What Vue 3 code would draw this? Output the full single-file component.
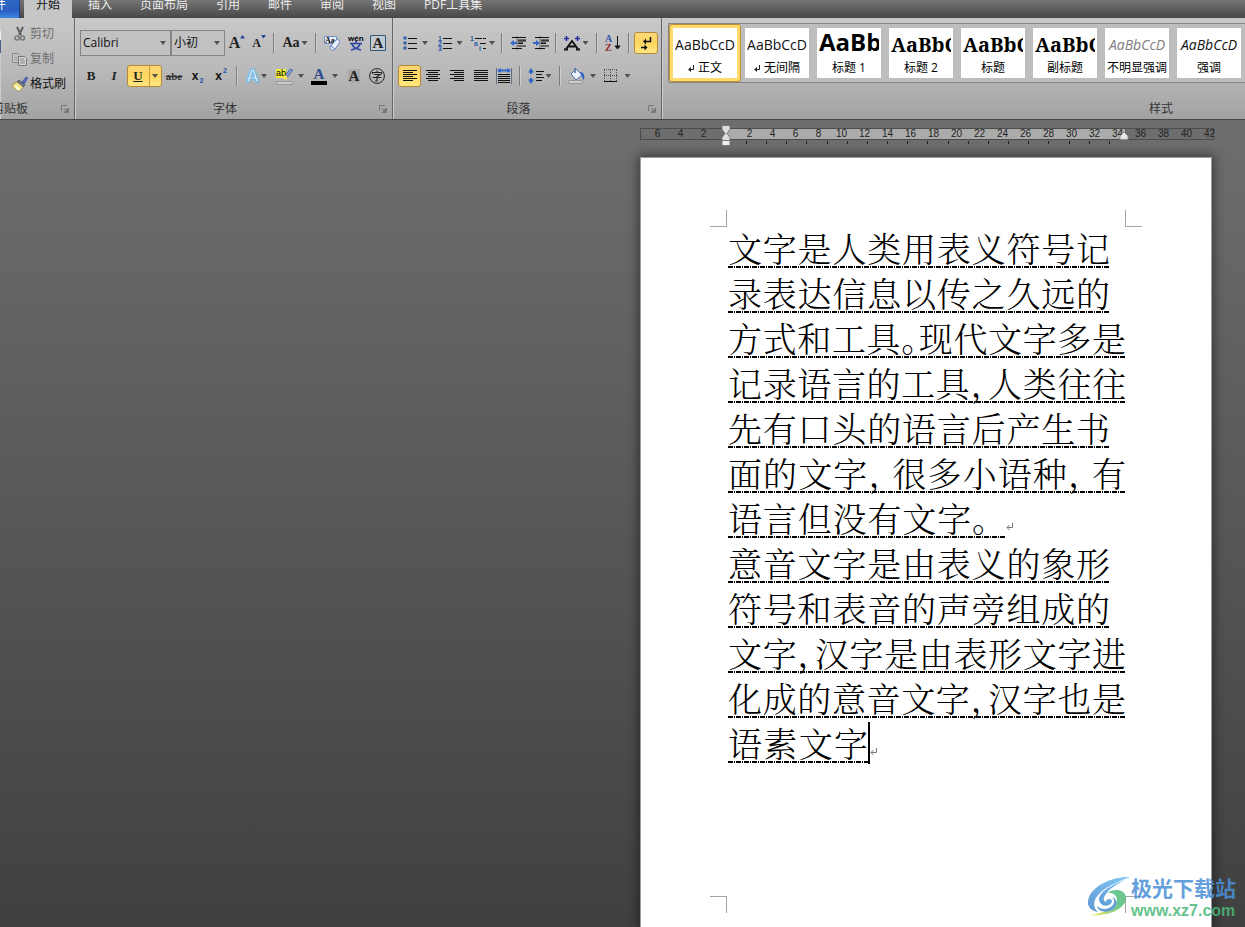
<script setup>
import { ref } from 'vue'

const tabs = ['开始', '插入', '页面布局', '引用', '邮件', '审阅', '视图', 'PDF工具集']
const activeTab = ref('开始')
const fontName = ref('Calibri')
const fontSize = ref('小初')

const styles = [
  { name: '正文', sample: 'AaBbCcD', kind: 'plain', mark: true },
  { name: '无间隔', sample: 'AaBbCcD', kind: 'plain', mark: true },
  { name: '标题 1', sample: 'AaBb', kind: 'h1' },
  { name: '标题 2', sample: 'AaBbC', kind: 'h2' },
  { name: '标题', sample: 'AaBbC', kind: 'title' },
  { name: '副标题', sample: 'AaBbC', kind: 'title' },
  { name: '不明显强调', sample: 'AaBbCcD', kind: 'subtle' },
  { name: '强调', sample: 'AaBbCcD', kind: 'em' },
]
const activeStyle = ref('正文')

const rulerLeft = [6, 4, 2]
const rulerRight = Array.from({ length: 21 }, (_, i) => (i + 1) * 2)

const lines = [
  { text: '文字是人类用表义符号记', size: 'normal' },
  { text: '录表达信息以传之久远的', size: 'normal' },
  { text: '方式和工具。现代文字多是', size: 'wide' },
  { text: '记录语言的工具，人类往往', size: 'wide' },
  { text: '先有口头的语言后产生书', size: 'normal' },
  { text: '面的文字，很多小语种，有', size: 'wide loose' },
  { text: '语言但没有文字。', size: 'mid', end: true },
  { text: '意音文字是由表义的象形', size: 'normal' },
  { text: '符号和表音的声旁组成的', size: 'normal' },
  { text: '文字，汉字是由表形文字进', size: 'wide' },
  { text: '化成的意音文字，汉字也是', size: 'wide' },
  { text: '语素文字', size: 'short', caret: true, end: true },
]
const parts = (t) => t.split(/([，。])/).filter(Boolean)
</script>

<template>
  <div class="app">
    <nav class="tabs">
      <button class="file">文件</button>
      <button v-for="t in tabs" :key="t" class="tab" :class="{ active: t === activeTab }" @click="activeTab = t">{{ t }}</button>
    </nav>

    <header class="ribbon">
      <section class="group clipboard">
        <div class="clip-rows">
          <button class="clip off">
            <svg width="16" height="16" viewBox="0 0 16 16"><path d="M5 1l4 8M11 1L7 9" stroke="#5e5e5e" stroke-width="2" fill="none" /><circle cx="5" cy="12" r="2" fill="none" stroke="#777" stroke-width="1.5" /><circle cx="10.500" cy="12" r="2" fill="none" stroke="#777" stroke-width="1.500" /></svg>剪切
          </button>
          <button class="clip off">
            <svg width="16" height="16" viewBox="0 0 16 16"><path d="M.5 2.500h6l2 2v7h-8z" fill="#ccc" stroke="#888" /><path d="M2 5h4M2 7h4M2 9h4" stroke="#999" /><path d="M6.500 5.500h6l2 2v7h-8z" fill="#d4d4d4" stroke="#777" /><path d="M8 8h4M8 10h5M8 12h5" stroke="#888" /></svg>复制
          </button>
          <button class="clip">
            <svg width="16" height="16" viewBox="0 0 16 16"><path d="M10 6l4-5 2 1-4 6z" fill="#5368b8" stroke="#334a96" stroke-width=".6" /><path d="M7 4l6 5-2 2-6-5z" fill="#6d7690" stroke="#333" stroke-width=".6" /><path d="M5 6l6 5-3 4c-3 0-6-2-8-6z" fill="#f4e48c" stroke="#8a7a35" stroke-width=".7" /><path d="M4 9l4 4-1 2-4-3z" fill="#fffbe0" /></svg>格式刷
          </button>
        </div>
        <svg class="paste-edge" width="2" height="22" viewBox="0 0 2 22"><path d="M0 0h1v9H0z" fill="#efefef" /><path d="M0 9h1v13H0z" fill="#4b6286" /></svg>
        <footer><span class="clip-label">剪贴板</span><button class="launch" aria-label="剪贴板设置"><svg width="8" height="8" viewBox="0 0 8 8"><path d="M.5 6V.500H6M3 3l2 2" fill="none" stroke="#777" /><path d="M7.500 3v4.500H3z" fill="#777" stroke="#777" /></svg></button></footer>
      </section>

      <section class="group font">
        <div class="row f1">
          <div class="combo"><select v-model="fontName" aria-label="字体"><option>Calibri</option></select><i class="arr"></i></div>
          <div class="combo"><select v-model="fontSize" aria-label="字号"><option>小初</option></select><i class="arr"></i></div>
          <button aria-label="增大字体"><span class="a16">A</span><svg class="up" width="5" height="4" viewBox="0 0 5 4"><path d="M0 3.500L2.500 0 5 3.500z" fill="#24479a" /></svg></button>
          <button aria-label="缩小字体"><span class="a12">A</span><svg class="up" width="5" height="4" viewBox="0 0 5 4"><path d="M0 0h5L2.500 3.500z" fill="#24479a" /></svg></button>
          <i class="sep"></i>
          <button class="drop tight" aria-label="更改大小写"><span class="a14">Aa</span><i class="arr"></i></button>
          <i class="sep"></i>
          <button aria-label="清除格式"><svg width="16" height="16" viewBox="0 0 16 16"><path d="M.5 1.500h12v7H.500z" fill="#e8efff" stroke="#718cc9" /><text x="1" y="8" font-size="8" font-weight="700" font-family="Liberation Serif">Aa</text><path d="M6 12l6-7c1-1 4 0 4 2l-5 7c-1 2-5 1-5-2z" fill="#edf2ff" stroke="#6682bd" /><path d="M7 11l4 3" stroke="#6682bd" /></svg></button>
          <button aria-label="拼音指南"><svg width="16" height="18" viewBox="0 0 16 18"><text x="0" y="7" font-size="8" font-weight="700" font-family="Liberation Sans">wén</text><path d="M2 9.500h12M8 7v2M4 10c1 3 4 5 9 6M12 10c-1 3-4 5-9 6" stroke="#2946a4" stroke-width="1.600" fill="none" /></svg></button>
          <button aria-label="字符边框"><svg width="16" height="16" viewBox="0 0 16 16"><path d="M.5.500h15v15H.500z" fill="#c4c9cf" stroke="#345a79" /><text x="2.500" y="13" font-size="15" font-weight="700" font-family="Liberation Serif" fill="#222">A</text></svg></button>
        </div>
        <div class="row f2">
          <button class="serif"><b>B</b></button>
          <button class="serif"><b><i>I</i></b></button>
          <div class="split">
            <button class="serif"><b><u>U</u></b></button><button aria-label="下划线样式"><i class="arr"></i></button>
          </div>
          <button class="strike">abe</button>
          <button class="xs" aria-label="下标">x<sub>2</sub></button>
          <button class="xs" aria-label="上标">x<sup>2</sup></button>
          <i class="sep"></i>
          <button class="drop tight" aria-label="文本效果"><span class="glow">A</span><i class="arr"></i></button>
          <button class="drop" aria-label="突出显示"><svg width="17" height="17" viewBox="0 0 17 17"><path d="M0 1h10v9H0z" fill="#f5ee38" /><text x="0" y="8" font-size="9" font-family="Liberation Sans">ab</text><path d="M14 1l3 1-6 8-3 1 1-3z" fill="#7e9bd0" stroke="#3e5d99" stroke-width=".7" /><path d="M6 9l3 3 3-2-3-3z" fill="#f8e64a" /><path d="M.5 13.500h16v3H.500z" fill="#ccc" stroke="#999" /></svg><i class="arr"></i></button>
          <button class="drop" aria-label="字体颜色"><svg width="16" height="17" viewBox="0 0 16 17"><text x="2.500" y="11" font-size="15" font-weight="700" font-family="Liberation Serif" fill="#2b4a8c">A</text><path d="M0 13h16v4H0z" /></svg><i class="arr"></i></button>
          <button aria-label="字符底纹"><span class="shade">A</span></button>
          <button aria-label="带圈字符"><svg width="16" height="16" viewBox="0 0 16 16"><circle cx="8" cy="8" r="7.400" fill="none" stroke="#222" /><path d="M8 2.500v2M3.500 6V4.500h9V6M5 6.500h6L8 8.500V13H6M3.500 9.500h9" fill="none" stroke="#222" stroke-width="1.100" /></svg></button>
        </div>
        <footer><span>字体</span><button class="launch" aria-label="字体设置"><svg width="8" height="8" viewBox="0 0 8 8"><path d="M.5 6V.500H6M3 3l2 2" fill="none" stroke="#777" /><path d="M7.500 3v4.500H3z" fill="#777" stroke="#777" /></svg></button></footer>
      </section>

      <section class="group para">
        <div class="row p1">
          <button class="drop" aria-label="项目符号"><svg width="14" height="14" viewBox="0 0 14 14"><g fill="#3a62ae"><circle cx="2" cy="2" r="1.800" /><circle cx="2" cy="7" r="1.800" /><circle cx="2" cy="12" r="1.800" /></g><path d="M5 2.500h9M5 7.500h9M5 12.500h9" stroke="#111" /></svg><i class="arr"></i></button>
          <button class="drop" aria-label="编号"><svg width="14" height="15" viewBox="0 0 14 15"><g fill="#2f58aa" font-size="7" font-weight="700" font-family="Liberation Sans"><text x="0" y="5">1</text><text x="0" y="10">2</text><text x="0" y="15">3</text></g><path d="M5 2.500h9M5 7.500h9M5 12.500h9" stroke="#111" /></svg><i class="arr"></i></button>
          <button class="drop tight" aria-label="多级列表"><svg width="17" height="15" viewBox="0 0 17 15"><g fill="#2f58aa" font-size="7" font-weight="700" font-family="Liberation Sans"><text x="0" y="5">1</text><text x="4" y="10">a</text><text x="9" y="15">i</text></g><path d="M5 2.500h11M10 7.500h6M13 12.500h3" stroke="#111" stroke-dasharray="7 1" /></svg><i class="arr"></i></button>
          <i class="sep"></i>
          <button aria-label="减少缩进量"><svg width="16" height="14" viewBox="0 0 16 14"><path d="M2 1.500h14M8 4h8M8 7h5M8 10h8M2 12.500h10" stroke="#111" /><path d="M8 5h8M8 7.500h5" stroke="#111" /><path d="M7 .5v13" stroke="#111" stroke-dasharray="1 1" /><path d="M0 7l4-3v2h3v2H4v2z" fill="#3467c2" /></svg></button>
          <button aria-label="增加缩进量"><svg width="16" height="14" viewBox="0 0 16 14"><path d="M2 1.500h14M8 4h8M8 7h5M8 10h8M2 12.500h10" stroke="#111" /><path d="M8 5h8M8 7.500h5" stroke="#111" /><path d="M7 .5v13" stroke="#111" stroke-dasharray="1 1" /><path d="M7 7L3 4v2H0v2h3v2z" fill="#3467c2" /></svg></button>
          <i class="sep"></i>
          <button class="drop tight" aria-label="中文版式"><svg width="18" height="15" viewBox="0 0 18 15"><path d="M3 13L9 5l6 8M5 10.500h8M1 13.500h4M13 13.500h4" fill="none" stroke="#111" stroke-width="1.800" /><path d="M1 2.500h5M3.500 0v5M12 2.500h5M14.500 0v5" stroke="#2a2a9c" stroke-width="1.500" /></svg><i class="arr"></i></button>
          <i class="sep"></i>
          <button aria-label="排序"><svg width="16" height="16" viewBox="0 0 16 16"><text x="0" y="7" font-size="10" font-weight="700" font-family="Liberation Serif" fill="#2f58aa">A</text><text x="0" y="16" font-size="10" font-weight="700" font-family="Liberation Serif" fill="#93282d">Z</text><path d="M12.500 1v12M10 11l2.500 3 2.500-3z" stroke="#111" fill="#111" /></svg></button>
          <i class="sep"></i>
          <button class="on" aria-label="显示编辑标记"><svg width="12" height="13" viewBox="0 0 12 13"><path d="M10.500 0v4.500H5M1 10.500h5" stroke="#111" fill="none" stroke-width="1.500" /><path d="M6 1.500v6L3 4.500zM4.500 7.500v6l3-3z" fill="#111" /></svg></button>
        </div>
        <div class="row p2">
          <button class="on" aria-label="左对齐"><svg width="14" height="12" viewBox="0 0 14 12"><path d="M0 .5h14M0 2.500h10M0 4.500h14M0 6.500h10M0 8.500h14M0 10.500h10" stroke="#111" /></svg></button>
          <button aria-label="居中"><svg width="14" height="12" viewBox="0 0 14 12"><path d="M0 .5h14M2 2.500h10M0 4.500h14M2 6.500h10M0 8.500h14M2 10.500h10" stroke="#111" /></svg></button>
          <button aria-label="右对齐"><svg width="14" height="12" viewBox="0 0 14 12"><path d="M0 .5h14M4 2.500h10M0 4.500h14M4 6.500h10M0 8.500h14M4 10.500h10" stroke="#111" /></svg></button>
          <button aria-label="两端对齐"><svg width="14" height="12" viewBox="0 0 14 12"><path d="M0 .5h14M0 2.500h14M0 4.500h14M0 6.500h14M0 8.500h14M0 10.500h14" stroke="#111" /></svg></button>
          <button aria-label="分散对齐"><svg width="16" height="16" viewBox="0 0 16 16"><path d="M.5 0v16M15.500 0v16" stroke="#5c6d86" /><path d="M2 2.500h12" stroke="#2f67c4" stroke-width="2" /><path d="M1 2.500L5 0v5zM15 2.500L11 0v5z" fill="#2f67c4" /><path d="M2 6.500h12M2 8.500h12M2 10.500h12M2 12.500h12M2 14.500h12" stroke="#111" /></svg></button>
          <i class="sep"></i>
          <button class="drop tight" aria-label="行距"><svg width="16" height="16" viewBox="0 0 16 16"><path d="M3 3v3M3 10v3" stroke="#2f67c4" stroke-width="2" /><path d="M0 4.500L3 0l3 4.500zM0 11.500L3 16l3-4.500z" fill="#2f67c4" /><path d="M8 3.500h8M8 6.500h6M8 9.500h8M8 12.500h6" stroke="#111" /></svg><i class="arr"></i></button>
          <i class="sep"></i>
          <button class="drop" aria-label="底纹"><svg width="17" height="16" viewBox="0 0 17 16"><path d="M3 6l5-5 6 6-6 5z" fill="#e8f0fb" stroke="#55719f" /><path d="M7 0v5" stroke="#55719f" stroke-width="1.500" /><path d="M12 4c4 0 5 3 4 8-2-1-2-4-3-5z" fill="#3468c0" /><path d="M.5 12.500h14v3H.500z" fill="#ccc" stroke="#999" /></svg><i class="arr"></i></button>
          <button class="drop wide-gap" aria-label="边框"><svg width="14" height="14" viewBox="0 0 14 14"><path d="M.5 1v11M6.500 1v11M12.500 1v11M0 .5h13M0 6.500h13" stroke="#555" stroke-dasharray="1 1" /><path d="M0 12.500h13" stroke="#111" stroke-width="1" /></svg><i class="arr"></i></button>
        </div>
        <footer><span>段落</span><button class="launch" aria-label="段落设置"><svg width="8" height="8" viewBox="0 0 8 8"><path d="M.5 6V.500H6M3 3l2 2" fill="none" stroke="#777" /><path d="M7.500 3v4.500H3z" fill="#777" stroke="#777" /></svg></button></footer>
      </section>

      <section class="group styles">
        <div class="gallery">
          <button v-for="s in styles" :key="s.name" class="card" :class="{ sel: s.name === activeStyle }" @click="activeStyle = s.name">
            <span class="sample" :class="s.kind">{{ s.sample }}</span>
            <span class="name"><svg v-if="s.mark" width="6" height="7" viewBox="0 0 6 7"><path d="M5.500 0v4.500H1" fill="none" stroke="#222" /><path d="M3 2v5L0 4.500z" fill="#222" /></svg>{{ s.name }}</span>
          </button>
        </div>
        <footer><span>样式</span></footer>
      </section>
    </header>

    <main class="workspace">
      <div class="doc">
        <div class="ruler">
          <div class="nums out-l"><span v-for="n in rulerLeft" :key="n">{{ n }}</span></div>
          <div class="nums in"><span v-for="n in rulerRight" :key="n">{{ n }}</span></div>
          <svg class="mark-l" width="10" height="22" viewBox="0 0 10 22"><path d="M1 .5h8v4l-3 4 3 4v3H1v-3l3-4-3-4z" fill="#ddd" stroke="#777" /><path d="M1 15.500h8v5H1z" fill="#eee" stroke="#777" /></svg>
          <svg class="mark-r" width="10" height="9" viewBox="0 0 10 9"><path d="M1 8.500V5l4-4 4 4v3.500z" fill="#e8e8e8" stroke="#888" /></svg>
        </div>
        <div class="ticks"><i v-for="n in 19" :key="n"></i></div>
        <article class="page">
          <i class="corner tl"></i><i class="corner tr"></i><i class="corner bl"></i><i class="corner br"></i>
          <div v-for="(l, i) in lines" :key="i" class="line">
            <p :class="l.size"><template v-for="(p, j) in parts(l.text)" :key="j"><span v-if="p === '，' || p === '。'" class="punct">{{ p }}</span><template v-else>{{ p }}</template></template></p>
            <i v-if="l.caret" class="caret"></i>
            <svg v-if="l.end" class="ret" width="8" height="8" viewBox="0 0 8 8"><path d="M6.500 0v4.500H1M3.500 2L1 4.500 3.500 7" fill="none" stroke="#777" /></svg>
          </div>
        </article>
      </div>
      <a class="watermark" href="#">
        <svg width="44" height="42" viewBox="0 0 44 42">
          <defs>
            <linearGradient id="wb" x1="0" y1="1" x2="1" y2="0"><stop offset="0" stop-color="#4388cf" /><stop offset="1" stop-color="#6fc3f2" /></linearGradient>
            <linearGradient id="wg" x1="0" y1="1" x2="1" y2="0"><stop offset="0" stop-color="#f1e64b" /><stop offset=".6" stop-color="#53bd7c" /></linearGradient>
          </defs>
          <path d="M43 1C26 0 3 10 1 25c-1 6 4 10 10 11-6-5-5-13 3-20C22 9 33 5 43 1z" fill="url(#wb)" />
          <path d="M38 4c-12 4-25 11-26 19 0 5 5 8 10 6 4-2 4-6 0-6-2 0-3 1-3 3-3-1-3-4 0-8 4-6 10-9 19-14z" fill="url(#wb)" />
          <path d="M20 17c7-5 18-4 19 4 1 10-15 20-36 18 12-1 26-8 27-15 0-5-5-8-10-7z" fill="url(#wg)" />
          <path d="M25 21c4 3 2 9-3 11-4 2-9 1-12-2 1 6 9 7 15 4 6-4 6-11 0-13z" fill="#4a90d0" />
        </svg>
        <span><b class="cn">极光下载站</b><b class="url">www.xz7.com</b></span>
      </a>
    </main>
  </div>
</template>

<style>
html, body { margin: 0; background: #404040; }
</style>

<style scoped>
* { box-sizing: border-box; }
.app { position: relative; height: 100vh; overflow: hidden; display: flex; flex-direction: column; font: 12px/16px "Open Sans", "Noto Sans CJK SC", sans-serif; color: #111; }
button { border: 0; background: none; padding: 0; margin: 0; color: inherit; font: inherit; white-space: nowrap; }
svg { display: block; flex: none; }
p { margin: 0; }

.tabs { height: 18px; flex: none; display: flex; align-items: flex-end; overflow: hidden; background: linear-gradient(#757575, #474747); }
.tabs button { flex: none; height: 26px; line-height: 16px; padding: 0 14px; color: #ececec; }
.tabs .file { width: 20px; padding: 0 13px 0 0; margin-right: 2px; display: flex; align-items: center; justify-content: flex-end; overflow: hidden; color: #fff; background: linear-gradient(#2f68c4 30%, #2a5fc0 70%, #3d85e0); border-right: 1px solid #1c3f86; }
.tabs .tab.active { margin: 0 2px; padding: 0 12px; background: #c6c6c6; color: #111; border-radius: 3px 3px 0 0; }

.ribbon { flex: none; height: 102px; display: flex; overflow: hidden; background: linear-gradient(#c8c8c8, #b8b8b8 55%, #a2a2a2); border-bottom: 1px solid #484848; }
.group { position: relative; flex: none; display: flex; flex-direction: column; padding: 12px 4px 0; border-right: 1px solid #666; box-shadow: inset 1px 0 #ccc; }
.clipboard { width: 75px; padding: 3px 0 0; }
.font { width: 318px; padding-left: 5px; }
.para { width: 269px; padding-left: 5px; }
.styles { flex: 1 0 1000px; padding: 5px 0 0 6px; border-right: 0; }
.group footer { margin-top: auto; height: 21px; display: flex; justify-content: center; align-items: center; line-height: 16px; color: #333; padding-right: 18px; }
.launch { position: absolute; right: 5px; bottom: 6px; }
.group .clip-label { margin-left: -36px; }

.clip-rows { display: flex; flex-direction: column; }
.clip { height: 25px; display: flex; align-items: center; gap: 2px; padding-left: 12px; }
.clip.off { color: #6d6d6d; }
.paste-edge { position: absolute; left: 0; top: 13px; }

.row { display: grid; height: 26px; align-items: center; justify-items: center; margin-bottom: 7px; }
.row > button { width: 100%; height: 24px; display: flex; align-items: center; justify-content: center; gap: 2px; }
.f1 { grid-template-columns: 91px 54px 24px 20px 10px 32px 9px 24px 23px 22px; }
.f2 { grid-template-columns: 22px 24px 36px 24px 23px 24px 7px 33px 34px 35px 24px 22px; }
.p1 { grid-template-columns: 35px 34px 31px 8px 23px 23px 7px 33px 9px 24px 8px 26px; }
.p2 { grid-template-columns: 23px 24px 24px 23px 24px 7px 33px 8px 36px 34px; }
.row > .drop { gap: 5px; }
.row > .tight { gap: 2px; }
.row > .wide-gap { gap: 7px; }
.arr { width: 6px; height: 4px; flex: none; background: #505050; clip-path: polygon(0 0, 100% 0, 50% 100%); }
.sep { width: 2px; height: 20px; background: #7c7c7c; border-right: 1px solid #cdcdcd; }
.combo { position: relative; width: 100%; height: 26px; border: 1px solid #858585; display: flex; align-items: center; background: #c1c1c1; }
.combo select { appearance: none; width: 100%; height: 24px; border: 0; background: none; padding: 0 0 0 2px; font: inherit; font-size: 12px; color: #111; }
.combo .arr { position: absolute; right: 4px; }
.a16, .a14, .a12, .shade, .serif { font-family: "Liberation Serif", serif; font-weight: 700; color: #222; }
.a16 { font-size: 16px; }
.a14 { font-size: 14px; }
.a12 { font-size: 12px; }
.row > button:has(.up) { gap: 0; }
.up { align-self: flex-start; margin-top: 4px; }
.serif { font-size: 13px; }
.split { width: 35px; height: 22px; display: flex; border: 1px solid #b98a35; border-radius: 3px; background: linear-gradient(#fbd77a, #fed65e 50%, #ffe785); }
.split button { flex: 1 0 21px; }
.split button + button { flex: 0 0 12px; border-left: 1px solid #c79a45; display: flex; align-items: center; justify-content: center; }
.strike { font-family: "Liberation Serif", serif; font-weight: 700; font-size: 11px; text-decoration: line-through; color: #333; }
.row > .xs { font-family: "Liberation Sans", sans-serif; font-weight: 700; font-size: 12px; gap: 1px; }
.xs sub, .xs sup { font-size: 7px; line-height: 8px; color: #2450b0; }
.xs sub { align-self: flex-end; margin-bottom: 3px; }
.xs sup { align-self: flex-start; margin-top: 3px; }
.glow { font: 700 18px/18px "Liberation Sans", sans-serif; color: #e8f5ff; -webkit-text-stroke: 1px #6fb2e0; text-shadow: 0 0 3px #7fd0f5; }
.shade { font-size: 15px; line-height: 14px; padding: 0 1px; background: #a9a9a9; }
.row > .on { width: 23px; height: 22px; border: 1px solid #b98a35; border-radius: 3px; background: linear-gradient(#fbd77a, #fed65e 50%, #ffe785); }
.p1 > .on { width: 24px; }

.gallery { display: flex; height: 60px; border: 1px solid #858585; border-right: 0; background: #bdbdbd; overflow: hidden; }
.card { flex: none; width: 72px; height: 58px; padding: 1px; border: 3px solid transparent; border-radius: 3px; display: flex; flex-direction: column; align-items: center; background: #fff content-box; }
.card.sel { border: 1px solid #c08d33; background: linear-gradient(#fff, #fff) content-box, #fedb6b; padding: 3px; }
.sample { width: 60px; height: 31px; line-height: 33px; font-size: 14px; overflow: hidden; color: #111; }
.sample.h1 { font: 700 24px/27px "Open Sans", sans-serif; color: #000; }
.sample.h2, .sample.title { font: 700 20px/33px "Noto Serif", "Liberation Serif", serif; color: #000; }
.sample.subtle { font-style: italic; color: #808080; }
.sample.em { font-style: italic; }
.name { display: flex; align-items: center; gap: 4px; line-height: 20px; color: #000; }
.gallery ~ footer { padding-right: 0; justify-content: flex-start; padding-left: 481px; }

.workspace { position: relative; flex: 1; overflow: hidden; display: flex; justify-content: flex-end; padding-right: 33px; background: linear-gradient(#6e6e6e, #404040); }
.doc { width: 572px; display: flex; flex-direction: column; padding-top: 8px; }
.ruler { position: relative; flex: none; height: 12px; width: 574px; display: flex; border: 1px solid #4c4c4c; background: linear-gradient(90deg, transparent 85px, #ababab 85px, #ababab 484px, transparent 484px); font: 10px/10px "Liberation Sans", sans-serif; color: #222; }
.nums { display: flex; }
.nums span { width: 23px; text-align: center; }
.out-l { padding-left: 5px; }
.in { padding-left: 23px; }
.mark-l { position: absolute; left: 80px; top: -4px; }
.mark-r { position: absolute; left: 478px; top: 2px; }
.ticks { display: flex; justify-content: space-between; width: 364px; margin: 1px 0 0 106px; height: 3px; flex: none; }
.ticks i { width: 1px; background: #222; }
.page { position: relative; flex: 1; margin-top: 13px; padding: 65px 0 0 87px; background: #fff; border: 1px solid #9a9ca4; border-bottom: 0; box-shadow: 0 0 10px 2px rgba(0, 0, 0, .45); color: #000; }
.corner { position: absolute; width: 17px; height: 17px; }
.tl { left: 69px; top: 52px; border: solid #a5a5a5; border-width: 0 1px 1px 0; }
.tr { right: 69px; top: 52px; border: solid #a5a5a5; border-width: 0 0 1px 1px; }
.bl { left: 69px; top: 738px; border: solid #a5a5a5; border-width: 1px 1px 0 0; }
.br { right: 69px; top: 738px; border: solid #a5a5a5; border-width: 1px 0 0 1px; }
.line { display: flex; align-items: center; height: 45px; }
.line p { height: 45px; font: 300 34px/50px "Noto Serif CJK SC", "Noto Sans CJK SC", serif; text-align-last: justify; white-space: nowrap; background: repeating-linear-gradient(90deg, #000 0 5px, #fff 5px 6px, #000 6px 7px, #fff 7px 8px) 0 100% / 100% 2px no-repeat; }
.normal { width: 382px; }
.wide { width: 398px; }
.mid { width: 278px; }
.short { width: 140px; }
.punct { font-feature-settings: "halt"; }
.mid .punct { font-feature-settings: normal; }
.loose .punct { margin-right: 6px; }
.caret { width: 2px; height: 42px; margin-top: 4px; background: #000; }
.ret { margin-top: 22px; }

.watermark { position: absolute; right: 9px; bottom: 7px; display: flex; align-items: center; opacity: .85; text-decoration: none; }
.watermark span { display: flex; flex-direction: column; }
.cn { font: 700 21px/29px "Noto Sans CJK SC", sans-serif; color: #4a90d6; }
.url { font: 700 16px/18px "Liberation Sans", sans-serif; color: #4bb878; }
</style>
